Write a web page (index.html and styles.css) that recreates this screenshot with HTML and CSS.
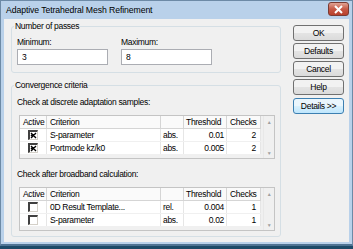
FILE: index.html
```html
<!DOCTYPE html>
<html lang="en">

<head>
  <meta charset="UTF-8">
  <title>Adaptive Tetrahedral Mesh Refinement</title>
  <link rel="stylesheet" href="styles.css">
</head>

<body>
  <div class="window">
    <div class="titlebar">
      <span class="title">Adaptive Tetrahedral Mesh Refinement</span>
      <span class="close-btn">
        <svg width="11" height="9" viewBox="0 0 11 9">
          <path d="M2 1 L9 8 M9 1 L2 8" stroke="#fff" stroke-width="2" />
        </svg>
      </span>
    </div>

    <div class="client">
      <div class="main">
        <fieldset class="group passes">
          <legend>Number of passes</legend>
          <div class="fields">
            <label class="field">
              <span>Minimum:</span>
              <input type="text" value="3">
            </label>
            <label class="field">
              <span>Maximum:</span>
              <input type="text" value="8">
            </label>
          </div>
        </fieldset>

        <fieldset class="group criteria">
          <legend>Convergence criteria</legend>

          <p class="caption">Check at discrete adaptation samples:</p>
          <div class="table">
            <div class="grid">
              <div class="row head">
                <span>Active</span>
                <span>Criterion</span>
                <span></span>
                <span>Threshold</span>
                <span>Checks</span>
              </div>
              <div class="row">
                <span class="check on"></span>
                <span>S-parameter</span>
                <span>abs.</span>
                <span class="num">0.01</span>
                <span class="num">2</span>
              </div>
              <div class="row">
                <span class="check on"></span>
                <span>Portmode kz/k0</span>
                <span>abs.</span>
                <span class="num">0.005</span>
                <span class="num">2</span>
              </div>
            </div>
            <div class="scrollbar"><span>&#9650;</span><span>&#9660;</span></div>
          </div>

          <p class="caption second">Check after broadband calculation:</p>
          <div class="table">
            <div class="grid">
              <div class="row head">
                <span>Active</span>
                <span>Criterion</span>
                <span></span>
                <span>Threshold</span>
                <span>Checks</span>
              </div>
              <div class="row">
                <span class="check"></span>
                <span>0D Result Template...</span>
                <span>rel.</span>
                <span class="num">0.004</span>
                <span class="num">1</span>
              </div>
              <div class="row">
                <span class="check"></span>
                <span>S-parameter</span>
                <span>abs.</span>
                <span class="num">0.02</span>
                <span class="num">1</span>
              </div>
            </div>
            <div class="scrollbar"><span>&#9650;</span><span>&#9660;</span></div>
          </div>
        </fieldset>
      </div>

      <div class="buttons">
        <button>OK</button>
        <button>Defaults</button>
        <button>Cancel</button>
        <button>Help</button>
        <button class="details">Details &gt;&gt;</button>
      </div>
    </div>
  </div>
</body>

</html>
```

FILE: styles.css
```css
body {
  margin: 0;
  padding: 0;
  font-family: "Liberation Sans", Arial, sans-serif;
  font-size: 8.5px;
  letter-spacing: -0.3px;
  color: #000;
  background: #1d4a68;
}

.window {
  width: 353px;
  height: 246px;
  box-sizing: border-box;
  background-color: #b9d1ea;
  border: 1px solid #6d8aa6;
  border-bottom: 2px solid #4e7393;
  display: flex;
  flex-direction: column;
}

/* title bar */
.titlebar {
  height: 18px;
  display: flex;
  align-items: center;
  justify-content: space-between;
  padding: 0 3px 0 5px;
}

.title {
  font-size: 8.7px;
  letter-spacing: -0.1px;
  color: #000;
}

.close-btn {
  width: 19px;
  height: 12px;
  display: flex;
  align-items: center;
  justify-content: center;
  border: 1px solid #7a3b33;
  border-radius: 3px;
  background: linear-gradient(#e0a394, #c75a47 50%, #b8402c);
  margin-top: -2px;
}

/* client area */
.client {
  flex: 1;
  margin: 0 3px 2px;
  background-color: #f0f0f0;
  display: flex;
}

.main {
  width: 270px;
  padding: 2px 0 0 7px;
}

.group {
  margin: 0;
  padding: 5px 5px 7px;
  border: 1px solid #d5dfe5;
  border-radius: 3px;
}

.group legend {
  padding: 0 1px;
  margin-left: -3px;
  line-height: 11px;
}

.fields {
  display: flex;
  gap: 13px;
}

.field {
  display: flex;
  flex-direction: column;
  gap: 1px;
  line-height: 11px;
}

.field input {
  width: 91px;
  height: 16px;
  box-sizing: border-box;
  margin: 0;
  padding: 0 4px;
  border: 1px solid #abadb3;
  background: #fff;
  font: inherit;
}

.criteria {
  margin-top: 7px;
  padding: 6px 5px 5px;
}

.caption {
  margin: 0 0 7px;
  line-height: 11px;
}

.caption.second {
  margin-top: 10px;
}

/* list views */
.table {
  margin-left: 2px;
  width: 256px;
  height: 44px;
  box-sizing: border-box;
  border: 1px solid #c4c4c4;
  display: flex;
  background-color: #f0f0f0;
}

.grid {
  width: 241px;
}

.row {
  display: grid;
  grid-template-columns: 27px 114px 23px 43px 34px;
  height: 13px;
  line-height: 12px;
  background-color: #fff;
  border-bottom: 1px solid #f0f0f0;
  box-sizing: border-box;
}

.row span {
  padding: 0 3px;
  border-right: 1px solid #e6e6e6;
  white-space: nowrap;
  overflow: hidden;
}

.row span:nth-child(3),
.row span:nth-child(4) {
  padding: 0 2px;
}

.row.head {
  background-color: #fafafa;
  border-bottom: 1px solid #d5d5d5;
}

.row.head span {
  border-right-color: #d5d5d5;
}

.row .num {
  text-align: right;
  padding-right: 4px;
}

.row .check {
  display: flex;
  align-items: center;
  justify-content: center;
  padding: 0;
}

.check::before {
  content: "";
  width: 7px;
  height: 7px;
  border-top: 2px solid #404040;
  border-left: 2px solid #404040;
  border-right: 1px solid #d4d0c8;
  border-bottom: 1px solid #d4d0c8;
  background-color: #fff;
}

.check.on::before {
  background: #fff url("data:image/svg+xml;utf8,<svg xmlns='http://www.w3.org/2000/svg' width='7' height='7'><path d='M1 1 L6 6 M6 1 L1 6 M1 3 L3 5' stroke='black' stroke-width='1.4'/></svg>") no-repeat center;
}

.scrollbar {
  flex: 1;
  margin-left: 2px;
  display: flex;
  flex-direction: column;
  justify-content: space-between;
  align-items: center;
  padding: 3px 0 2px;
  font-size: 5px;
  color: #a0a0a0;
  border-left: 1px solid #e8e8e8;
}

/* buttons */
.buttons {
  display: flex;
  flex-direction: column;
  gap: 2px;
  padding: 6px 0 0 12px;
}

button {
  width: 51px;
  height: 16px;
  margin: 0;
  padding: 0;
  font: inherit;
  letter-spacing: -0.3px;
  color: #000;
  border: 1px solid #707070;
  border-radius: 3px;
  background: linear-gradient(#f2f2f2 50%, #e4e4e4 50%, #dbdbdb);
}

button.details {
  margin-top: 1px;
  border-color: #3c7fb1;
  background: linear-gradient(#eaf6fd 50%, #d9f0fc 50%, #bee6fd);
}
```
